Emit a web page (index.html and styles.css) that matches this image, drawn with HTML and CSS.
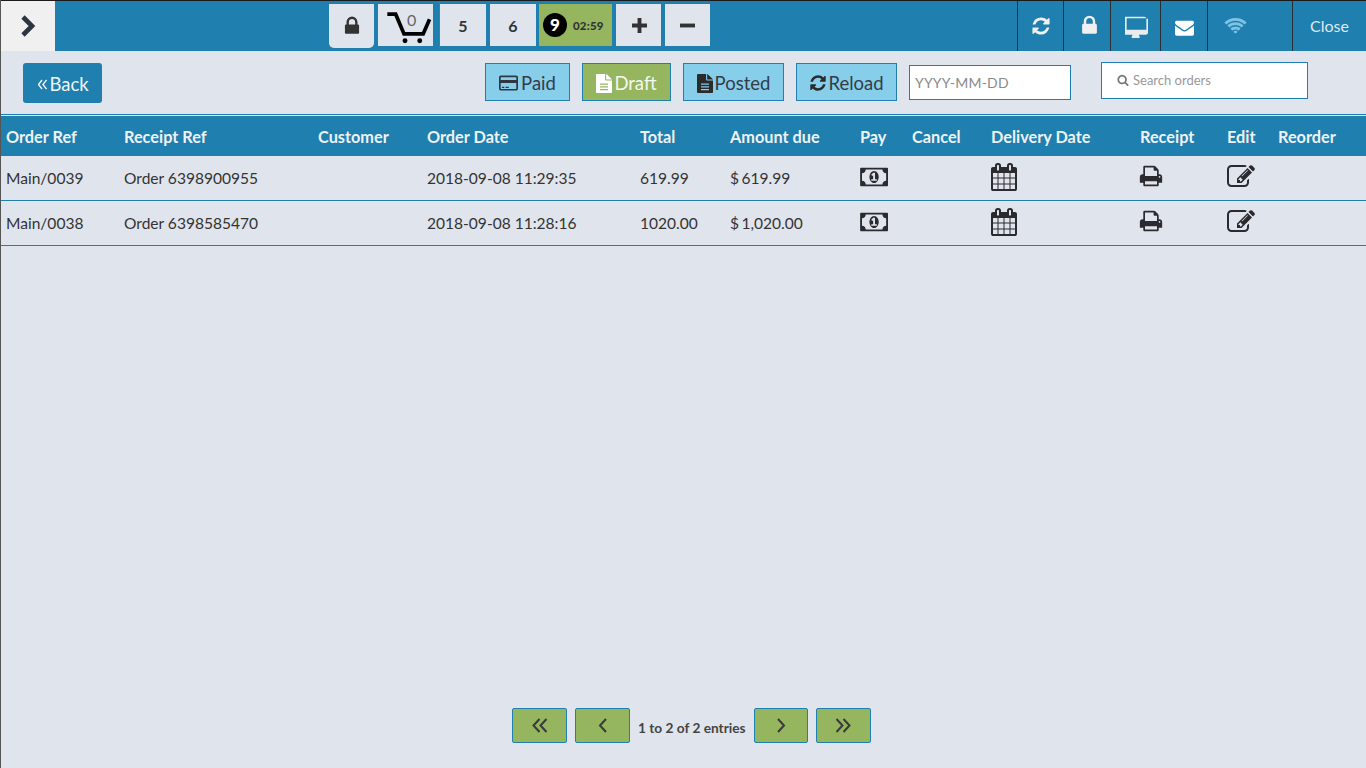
FILE: index.html
```html
<!DOCTYPE html>
<html lang="en">
<head>
<meta charset="utf-8">
<title>Orders</title>
<link rel="stylesheet" href="styles.css">
</head>
<body>
<svg class="sprite" xmlns="http://www.w3.org/2000/svg">
<defs>
<symbol id="i-lock" viewBox="0 0 1792 1792"><path d="M640 768h512v-192q0-106-75-181t-181-75-181 75-75 181v192zm832 96v576q0 40-28 68t-68 28h-960q-40 0-68-28t-28-68v-576q0-40 28-68t68-28h32v-192q0-184 132-316t316-132 316 132 132 316v192h32q40 0 68 28t28 68z"/></symbol>
<symbol id="i-refresh" viewBox="0 0 1792 1792"><path d="M1639 1056q0 5-1 7-64 268-268 434.5t-478 166.5q-146 0-282.5-55t-243.5-157l-129 129q-19 19-45 19t-45-19-19-45v-448q0-26 19-45t45-19h448q26 0 45 19t19 45-19 45l-137 137q71 66 161 102t187 36q134 0 250-65t186-179q11-17 53-117 8-23 30-23h192q13 0 22.5 9.5t9.5 22.5zm25-800v448q0 26-19 45t-45 19h-448q-26 0-45-19t-19-45 19-45l138-138q-148-137-349-137-134 0-250 65t-186 179q-11 17-53 117-8 23-30 23h-199q-13 0-22.5-9.5t-9.5-22.5v-7q65-268 270-434.5t480-166.5q146 0 284 55.5t245 156.5l130-129q19-19 45-19t45 19 19 45z"/></symbol>
<symbol id="i-desktop" viewBox="0 0 1792 1792"><path d="M1664 1120v-832q0-13-9.5-22.5t-22.5-9.5h-1472q-13 0-22.5 9.5t-9.5 22.5v832q0 13 9.5 22.5t22.5 9.5h1472q13 0 22.5-9.5t9.5-22.5zm128-832v1088q0 66-47 113t-113 47h-544q0 37 16 77.5t32 71 16 43.5q0 26-19 45t-45 19h-512q-26 0-45-19t-19-45q0-14 16-44t32-70 16-78h-544q-66 0-113-47t-47-113v-1088q0-66 47-113t113-47h1472q66 0 113 47t47 113z"/></symbol>
<symbol id="i-envelope" viewBox="0 0 1792 1792"><path d="M1792 710v794q0 66-47 113t-113 47h-1472q-66 0-113-47t-47-113v-794q44 49 101 87 362 246 497 345 57 42 92.5 65.5t94.5 48 110 24.5h2q51 0 110-24.5t94.5-48 92.5-65.5q170-123 498-345 57-39 100-87zm0-294q0 79-49 151t-122 123q-376 261-468 325-10 7-42.5 30.5t-54 38-52 32.5-57.5 27-50 9h-2q-23 0-50-9t-57.5-27-52-32.5-54-38-42.5-30.5q-91-64-262-182.5t-205-142.5q-62-42-117-115.5t-55-136.5q0-78 41.5-130t118.5-52h1472q65 0 112.5 47t47.5 113z"/></symbol>
<symbol id="i-wifi" viewBox="0 0 2048 1792"><path d="M1024 1523q-20 0-93-73.5t-73-93.5q0-32 62.5-54t103.5-22 103.5 22 62.5 54q0 20-73 93.5t-93 73.5zm270-271q-2 0-40-25t-101.5-50-128.5-25-128.5 25-101 50-40.5 25q-18 0-93.5-75t-75.5-93q0-13 10-23 78-77 196-121t233-44 233 44 196 121q10 10 10 23 0 18-75.5 93t-93.5 75zm273-272q-11 0-23-8-136-105-252-154.5t-268-49.5q-85 0-170.5 22t-149 53-113.5 62-79 53-31 22q-17 0-92-75t-75-93q0-12 10-22 132-132 320-205t380-73 380 73 320 205q10 10 10 22 0 18-75 93t-92 75zm271-271q-11 0-22-9-179-157-371.5-236.5t-420.5-79.5-420.5 79.5-371.5 236.5q-11 9-22 9-17 0-92.5-75t-75.5-93q0-13 10-23 187-186 445-288t527-102 527 102 445 288q10 10 10 23 0 18-75.5 93t-92.5 75z"/></symbol>
<symbol id="i-search" viewBox="0 0 1792 1792"><path d="M1216 832q0-185-131.5-316.5t-316.5-131.5-316.5 131.5-131.5 316.5 131.5 316.5 316.5 131.5 316.5-131.5 131.5-316.5zm512 832q0 52-38 90t-90 38q-54 0-90-38l-343-342q-179 124-399 124-143 0-273.5-55.5t-225-150-150-225-55.5-273.5 55.5-273.5 150-225 225-150 273.5-55.5 273.5 55.5 225 150 150 225 55.5 273.5q0 220-124 399l343 343q37 37 37 90z"/></symbol>
<symbol id="i-print" viewBox="0 0 1792 1792"><path d="M448 1536h896v-256h-896v256zm0-640h896v-384h-160q-40 0-68-28t-28-68v-160h-640v640zm1152 64q0-26-19-45t-45-19-45 19-19 45 19 45 45 19 45-19 19-45zm128 0v416q0 13-9.5 22.5t-22.5 9.5h-224v160q0 40-28 68t-68 28h-960q-40 0-68-28t-28-68v-160h-224q-13 0-22.5-9.5t-9.5-22.5v-416q0-79 56.5-135.5t135.5-56.5h64v-544q0-40 28-68t68-28h672q40 0 88 20t76 48l152 152q28 28 48 76t20 88v256h64q79 0 135.5 56.5t56.5 135.5z"/></symbol>
<symbol id="i-edit" viewBox="0 0 1792 1792"><path d="M888 1184l116-116-152-152-116 116v56h96v96h56zm440-720q-16-16-33 1l-350 350q-17 17-1 33t33-1l350-350q17-17 1-33zm80 594v190q0 119-84.5 203.5t-203.5 84.5h-832q-119 0-203.5-84.5t-84.5-203.5v-832q0-119 84.5-203.5t203.5-84.5h832q63 0 117 25 15 7 18 23 3 17-9 29l-49 49q-14 14-32 8-23-6-45-6h-832q-66 0-113 47t-47 113v832q0 66 47 113t113 47h832q66 0 113-47t47-113v-126q0-13 9-22l64-64q15-15 35-7t20 29zm-96-738l288 288-672 672h-288v-288zm444 132l-92 92-288-288 92-92q28-28 68-28t68 28l152 152q28 28 28 68t-28 68z"/></symbol>
<symbol id="i-calendar" viewBox="0 0 1664 1792"><path d="M128 1664h288v-288h-288v288zm352 0h320v-288h-320v288zm-352-352h288v-320h-288v320zm352 0h320v-320h-320v320zm-352-384h288v-288h-288v288zm736 736h320v-288h-320v288zm-384-736h320v-288h-320v288zm768 736h288v-288h-288v288zm-384-352h320v-320h-320v320zm-352-864v-288q0-13-9.5-22.5t-22.5-9.5h-64q-13 0-22.5 9.5t-9.5 22.5v288q0 13 9.5 22.5t22.5 9.5h64q13 0 22.5-9.5t9.5-22.5zm736 864h288v-320h-288v320zm-384-384h320v-288h-320v288zm384 0h288v-288h-288v288zm32-480v-288q0-13-9.5-22.5t-22.5-9.5h-64q-13 0-22.5 9.5t-9.5 22.5v288q0 13 9.5 22.5t22.5 9.5h64q13 0 22.5-9.5t9.5-22.5zm384-64v1280q0 52-38 90t-90 38h-1408q-52 0-90-38t-38-90v-1280q0-52 38-90t90-38h128v-96q0-66 47-113t113-47h64q66 0 113 47t47 113v96h384v-96q0-66 47-113t113-47h64q66 0 113 47t47 113v96h128q52 0 90 38t38 90z"/></symbol>
<symbol id="i-money" viewBox="0 0 2048 1792"><path d="M768 1152h384v-96h-128v-448h-114l-148 137 77 80q42-37 55-57h2v288h-128v96zm512-256q0 70-21 142t-59.5 134-101.5 101-138 39-138-39-101.5-101-59.5-134-21-142 21-142 59.5-134 101.5-101 138-39 138 39 101.5 101 59.5 134 21 142zm512 256v-512q-106 0-181-75t-75-181h-1152q0 106-75 181t-181 75v512q106 0 181 75t75 181h1152q0-106 75-181t181-75zm128-832v1152q0 26-19 45t-45 19h-1792q-26 0-45-19t-19-45v-1152q0-26 19-45t45-19h1792q26 0 45 19t19 45z"/></symbol>
<symbol id="i-card" viewBox="0 0 1792 1500"><path fill-rule="evenodd" d="M180 40h1432q80 0 130 50t50 130v1060q0 80-50 130t-130 50h-1432q-80 0-130-50t-50-130v-1060q0-80 50-130t130-50zm-20 190v230h1472v-230q0-30-30-30h-1412q-30 0-30 30zm0 530v520q0 30 30 30h1412q30 0 30-30v-520zm120 350h220v110h-220zm340 0h300v110h-300z"/></symbol>
<symbol id="i-file" viewBox="0 0 1408 1792" preserveAspectRatio="none"><path fill-rule="evenodd" d="M96 0h704v512q0 40 28 68t68 28h512v1088q0 40-28 68t-68 28h-1216q-40 0-68-28t-28-68v-1600q0-40 28-68t68-28zm800 0q26 6 48 28l436 436q22 22 28 48h-512zM352 896v128h704v-128zm0 256v128h704v-128zm0 256v128h704v-128z"/></symbol>
</defs>
</svg>

<header class="topbar">
  <button class="toggle" type="button" aria-label="Toggle">
    <svg class="chev" viewBox="0 0 16 22"><path d="M3 2l9 9-9 9"/></svg>
  </button>
  <div class="tabs">
    <div class="tab tab-lock"><svg class="ic ic-tablock"><use href="#i-lock"/></svg></div>
    <div class="tab tab-cart">
      <svg class="cart" viewBox="0 0 56 36"><path class="cart-line" d="M9.500 5h8.500l8.500 20h19.500l6.500-15"/><circle cx="27.500" cy="32" r="2.500"/><circle cx="42.500" cy="32" r="2.500"/></svg>
      <span class="cart-count">0</span>
    </div>
    <div class="tab tab-num">5</div>
    <div class="tab tab-num tab-six">6</div>
    <div class="tab tab-timer"><span class="ball">9</span><span class="clock">02:59</span></div>
    <div class="tab tab-op"><svg class="op op-plus" viewBox="0 0 14 14"><path d="M7 0v14M0 7h14"/></svg></div>
    <div class="tab tab-op"><svg class="op" viewBox="0 0 14 14"><path d="M0 7h14"/></svg></div>
  </div>
  <div class="status">
    <div class="cell cell-a"><svg class="ic ic-refresh"><use href="#i-refresh"/></svg></div>
    <div class="cell cell-b"><svg class="ic ic-slock"><use href="#i-lock"/></svg></div>
    <div class="cell cell-c"><svg class="ic ic-desk"><use href="#i-desktop"/></svg></div>
    <div class="cell cell-d"><svg class="ic ic-mail"><use href="#i-envelope"/></svg></div>
    <div class="cell cell-e"><svg class="ic ic-wifi"><use href="#i-wifi"/></svg></div>
    <div class="cell cell-close"><span class="close-text">Close</span></div>
  </div>
</header>

<section class="toolbar">
  <button class="back" type="button"><svg class="back-ic" viewBox="0 0 10 12"><path d="M4.500 1l-4 5 4 5M9.500 1l-4 5 4 5"/></svg>Back</button>
  <div class="filters">
    <button class="fbtn f-paid" type="button"><svg class="fic fic-card"><use href="#i-card"/></svg>Paid</button>
    <button class="fbtn f-draft" type="button"><svg class="fic fic-file"><use href="#i-file"/></svg>Draft</button>
    <button class="fbtn f-posted" type="button"><svg class="fic fic-file"><use href="#i-file"/></svg>Posted</button>
    <button class="fbtn f-reload" type="button"><svg class="fic fic-reload"><use href="#i-refresh"/></svg>Reload</button>
    <div class="date">YYYY-MM-DD</div>
  </div>
  <div class="search"><svg class="sic"><use href="#i-search"/></svg>Search orders</div>
</section>

<main class="content">
  <table class="orders">
    <colgroup>
      <col class="c1"><col class="c2"><col class="c3"><col class="c4"><col class="c5"><col class="c6"><col class="c7"><col class="c8"><col class="c9"><col class="c10"><col class="c11"><col class="c12">
    </colgroup>
    <thead>
      <tr><th>Order Ref</th><th>Receipt Ref</th><th>Customer</th><th>Order Date</th><th>Total</th><th>Amount due</th><th>Pay</th><th>Cancel</th><th>Delivery Date</th><th>Receipt</th><th>Edit</th><th>Reorder</th></tr>
    </thead>
    <tbody>
      <tr>
        <td>Main/0039</td><td>Order 6398900955</td><td></td><td>2018-09-08 11:29:35</td><td>619.99</td><td class="due">$ 619.99</td>
        <td><svg class="ric r-money"><use href="#i-money"/></svg></td><td></td>
        <td><svg class="ric r-cal"><use href="#i-calendar"/></svg></td>
        <td><svg class="ric r-print"><use href="#i-print"/></svg></td>
        <td><svg class="ric r-edit"><use href="#i-edit"/></svg></td><td></td>
      </tr>
      <tr>
        <td>Main/0038</td><td>Order 6398585470</td><td></td><td>2018-09-08 11:28:16</td><td>1020.00</td><td class="due">$ 1,020.00</td>
        <td><svg class="ric r-money"><use href="#i-money"/></svg></td><td></td>
        <td><svg class="ric r-cal"><use href="#i-calendar"/></svg></td>
        <td><svg class="ric r-print"><use href="#i-print"/></svg></td>
        <td><svg class="ric r-edit"><use href="#i-edit"/></svg></td><td></td>
      </tr>
    </tbody>
  </table>
</main>

<nav class="pager">
  <button class="pbtn" type="button" aria-label="First"><svg class="pic" viewBox="0 0 16 15"><path d="M7.500 1l-6 6.500 6 6.500M14.500 1l-6 6.500 6 6.500"/></svg></button>
  <button class="pbtn" type="button" aria-label="Previous"><svg class="pic" viewBox="0 0 16 15"><path d="M11 1l-6 6.500 6 6.500"/></svg></button>
  <span class="entries">1 to 2 of 2 entries</span>
  <button class="pbtn p-next" type="button" aria-label="Next"><svg class="pic" viewBox="0 0 16 15"><path d="M5 1l6 6.500-6 6.500"/></svg></button>
  <button class="pbtn" type="button" aria-label="Last"><svg class="pic" viewBox="0 0 16 15"><path d="M1.500 1l6 6.500-6 6.500M8.500 1l6 6.500-6 6.500"/></svg></button>
</nav>
</body>
</html>
```
FILE: styles.css
```css
* { box-sizing: border-box; }
html, body { height: 100%; }
body {
  margin: 0;
  height: 768px;
  overflow: hidden;
  display: flex;
  flex-direction: column;
  background: #e0e5ed;
  border-left: 1px solid #555;
  font-family: Lato, "Open Sans", sans-serif;
  color: #333;
}
.sprite { display: none; }
button { font-family: inherit; padding: 0; cursor: pointer; }
svg { display: block; fill: currentColor; }

/* top bar */
.topbar {
  height: 51px;
  margin-left: -1px;
  flex: none;
  display: flex;
  background: #1f7fae;
  border-top: 1px solid #1a1a1a;
}
.toggle {
  width: 55px;
  border: 0;
  background: #f0f0f0;
  display: flex;
  align-items: center;
  justify-content: center;
}
.chev { width: 16px; height: 22px; fill: none; stroke: #2b3440; stroke-width: 4.600; }
.tabs { margin-left: 274px; display: flex; align-items: flex-start; padding-top: 3px; }
.tab {
  height: 42px;
  background: #e0e5ed;
  display: flex;
  align-items: center;
  justify-content: center;
  color: #333;
}
.tab-lock { width: 45px; height: 44px; border-radius: 0 0 5px 5px; margin-right: 4px; }
.ic-tablock { width: 22px; height: 22px; margin-left: 1px; }
.tab-cart { width: 55px; margin-right: 7px; position: relative; }
.tab-cart::after {
  content: "";
  position: absolute;
  left: 61px;
  top: -3px;
  width: 1px;
  height: 47px;
  background: #4f7a92;
}
.cart { width: 56px; height: 36px; fill: #000; margin-top: 3px; }
.cart-line { fill: none; stroke: #000; stroke-width: 3.800; }
.cart-count { position: absolute; left: 29px; top: 7px; font-size: 16px; line-height: 18px; color: #666; }
.tab-num { width: 46px; margin-right: 4px; font-size: 16px; font-weight: 700; }
.tab-six { margin-right: 3px; }
.tab-timer { width: 73px; background: #95b55f; margin-right: 4px; justify-content: flex-start; padding-left: 4px; }
.ball {
  width: 24px;
  height: 24px;
  border-radius: 50%;
  background: #000;
  color: #fff;
  font-size: 17px;
  font-weight: 900;
  line-height: 24px;
  text-align: center;
}
.clock { margin-left: 6px; font-size: 11.500px; font-weight: 900; color: #333; letter-spacing: .2px; }
.tab-op { width: 45px; margin-right: 4px; }
.op { width: 15px; height: 15px; fill: none; stroke: #333; stroke-width: 3.600; }
.op-plus { margin-left: 2px; }

.status { margin-left: auto; display: flex; height: 50px; }
.cell {
  border-left: 1px solid #2a2f33;
  display: flex;
  align-items: center;
  justify-content: center;
  color: #f0f0f0;
}
.cell-a { width: 46px; }
.cell-b { width: 47px; }
.cell-c { width: 50px; }
.cell-d { width: 47px; }
.cell-e { width: 85px; justify-content: flex-start; padding-left: 16px; color: #7ec3e6; }
.cell-close { width: 74px; font-size: 16px; color: #dfe8ef; justify-content: flex-start; padding-left: 17px; }
.close-text { margin-top: -2px; }
.ic-refresh { width: 20px; height: 20px; margin-top: -1px; }
.ic-slock { width: 23px; height: 23px; margin-left: 5px; margin-top: -1px; }
.ic-desk { width: 23px; height: 23px; color: #e8ecef; margin-left: 1px; }
.ic-mail { width: 19px; height: 19px; color: #fff; margin-top: 2px; }
.ic-wifi { width: 23px; height: 21px; margin-top: 0; }

/* toolbar */
.toolbar {
  flex: none;
  height: 64px;
  display: flex;
  align-items: flex-start;
  padding: 12px 0 0 23px;
  border-bottom: 1px solid #1f7fae;
  margin-left: -1px;
}
.back {
  width: 79px;
  height: 40px;
  padding-top: 2px;
  padding-left: 2px;
  background: #1f7fae;
  color: #f2f5f8;
  border: 0;
  border-radius: 3px;
  font-size: 18.500px;
  display: flex;
  align-items: center;
  justify-content: center;
}
.back-ic { width: 9px; height: 11px; margin-right: 2px; fill: none; stroke: #f2f5f8; stroke-width: 1.500; }
.filters { display: flex; margin-left: 383px; gap: 12px; }
.fbtn {
  height: 38px;
  padding-top: 2px;
  background: #87ceeb;
  border: 1px solid #1f7fae;
  font-size: 18.500px;
  color: #333c48;
  display: flex;
  align-items: center;
  justify-content: center;
}
.f-paid { width: 85px; }
.f-draft { width: 89px; background: #95b55f; color: #f4f7ef; }
.f-posted { width: 101px; }
.f-reload { width: 101px; }
.fic { flex: none; }
.fic-card { width: 19px; height: 16px; margin-right: 3px; color: #2f3842; }
.fic-file { width: 16px; height: 19px; margin-right: 2px; color: #2b2b2b; }
.f-draft .fic-file { color: #fff; }
.fic-reload { width: 18px; height: 18px; margin-right: 1px; color: #2b2b2b; }
.date {
  width: 162px;
  height: 35px;
  margin-top: 2px;
  background: #fff;
  border: 1px solid #1f7fae;
  color: #8a8a8a;
  font-size: 14px;
  line-height: 33px;
  padding-left: 5px;
  letter-spacing: .2px;
}
.search {
  width: 207px;
  height: 37px;
  margin-top: -1px;
  margin-left: 30px;
  padding-bottom: 2px;
  background: #fff;
  border: 1px solid #1f7fae;
  color: #999;
  font-size: 13px;
  display: flex;
  align-items: center;
  padding-left: 15px;
}
.sic { width: 12px; height: 12px; margin-right: 4px; color: #777; }

/* table */
.content { flex: 1; min-height: 0; }
.orders { border-collapse: separate; border-spacing: 0; table-layout: fixed; width: 1365px; margin-top: 1px; }
.c1 { width: 118px; } .c2 { width: 194px; } .c3 { width: 109px; } .c4 { width: 213px; }
.c5 { width: 90px; } .c6 { width: 130px; } .c7 { width: 52px; } .c8 { width: 79px; }
.c9 { width: 149px; } .c10 { width: 87px; } .c11 { width: 51px; } .c12 { width: 93px; }
.orders th {
  height: 40px;
  background: #1f7fae;
  color: #eef2f5;
  font-size: 16.300px;
  font-weight: 700;
  text-align: left;
  padding: 0 0 0 5px;
  white-space: nowrap;
}
.orders td {
  height: 45px;
  padding: 0 0 0 5px;
  border-bottom: 1px solid #1f7fae;
  font-size: 15.550px;
  color: #333;
  white-space: nowrap;
}
.orders td.due { word-spacing: -1.500px; }
.ric { color: #2b2b2f; }
.r-money { width: 30px; height: 26px; margin-top: -3px; }
.r-cal { width: 26px; height: 28px; margin-top: -2px; }
.r-print { width: 24px; height: 24px; margin-left: -1px; margin-top: -5px; }
.r-edit { width: 28px; height: 28px; margin-top: -2px; }

/* pager */
.pager {
  flex: none;
  height: 60px;
  display: flex;
  align-items: flex-start;
  padding-left: 511px;
}
.pbtn {
  width: 55px;
  height: 35px;
  background: #95b55f;
  border: 1px solid #1f7fae;
  border-radius: 2px;
  margin-right: 8px;
  display: flex;
  align-items: center;
  justify-content: center;
  color: #333;
}
.p-next { width: 54px; }
.pic { width: 16px; height: 15px; fill: none; stroke: #3a3a3a; stroke-width: 2; }
.entries { font-size: 13.700px; font-weight: 700; color: #444; line-height: 40px; margin-right: 8px; }
```
